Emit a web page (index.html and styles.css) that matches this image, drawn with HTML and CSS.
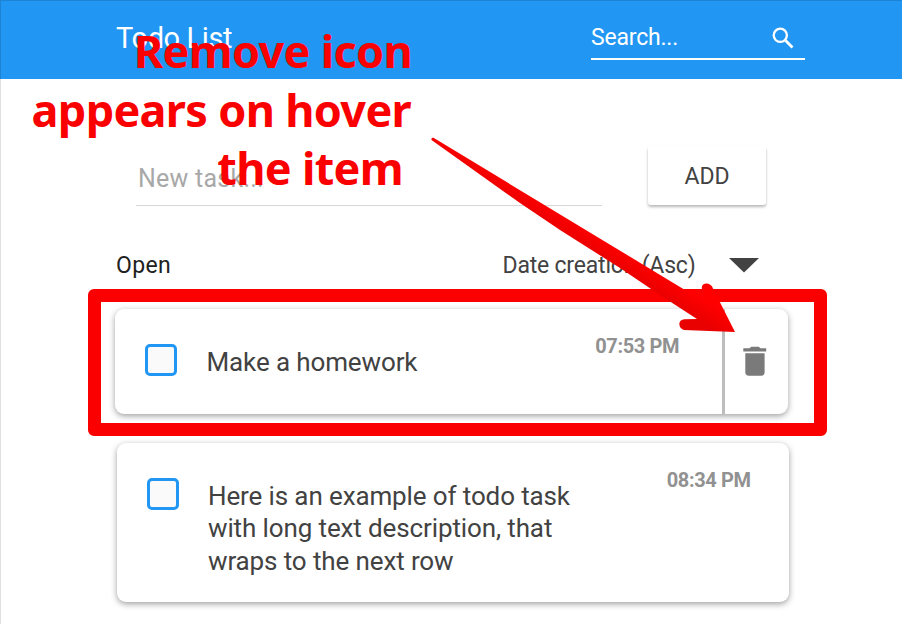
FILE: index.html
```html
<!DOCTYPE html>
<html lang="en">
<head>
<meta charset="utf-8">
<title>Todo List</title>
<link rel="stylesheet" href="styles.css">
</head>
<body>
<div class="app">
  <header class="header">
    <h1 class="title"><span>Todo List</span></h1>
    <div class="search">
      <span>Search...</span>
      <svg class="search-icon" viewBox="0 0 22 22"><circle cx="8.3" cy="8.3" r="6.6" fill="none" stroke="currentColor" stroke-width="2.3"/><path d="M13 13L20.5 20.5" stroke="currentColor" stroke-width="2.8"/></svg>
    </div>
  </header>
  <main class="main">
    <form class="new-task">
      <div class="field"><span>New task...</span></div>
      <button class="add" type="button">ADD</button>
    </form>
    <div class="toolbar">
      <span class="status">Open</span>
      <span class="sort">Date creation (Asc)</span>
      <svg class="caret" viewBox="0 0 30 15"><path d="M0 0H30L15 14.5Z" fill="#424242"/></svg>
    </div>
    <article class="card card-hover">
      <span class="checkbox"></span>
      <p class="text"><span>Make a homework</span></p>
      <time class="time">07:53 PM</time>
      <div class="remove">
        <svg viewBox="0 0 24 30"><path d="M0.3 2.2H6.5L8.3 0.8H15.7L17.5 2.2H23.2V5.6H0.3ZM2.3 7.3H21.6V26Q21.6 29.8 18 29.8H6Q2.3 29.8 2.3 26Z" fill="#7a7a7a"/></svg>
      </div>
    </article>
    <article class="card card-long">
      <span class="checkbox"></span>
      <p class="text"><span>Here is an example of todo task</span><br><span>with long text description, that</span><br><span>wraps to the next row</span></p>
      <time class="time">08:34 PM</time>
    </article>
  </main>
</div>
<div class="highlight"></div>
<p class="note"><span class="note-first">Remove icon</span><br><span>appears on hover</span><br><span class="note-last">the item</span></p>
<svg class="arrow" viewBox="0 0 902 624">
  <defs>
    <linearGradient id="shade" gradientUnits="userSpaceOnUse" x1="622" y1="228" x2="602" y2="260">
      <stop offset="0.45" stop-color="#ff0000"/><stop offset="1" stop-color="#e90000"/>
    </linearGradient>
  </defs>
  <path d="M433.5 137.8L685 290L702.2 290C699.5 282 711 281.500 713 288.500L735 332L684 330C677.500 328 678 319.500 684.500 319.300L697 319L660 295L620 268L560 230L520 203L431.500 140Q431 137.500 433.500 137.800Z" fill="url(#shade)"/>
</svg>
</body>
</html>
```
FILE: styles.css
```css
* { box-sizing: border-box; }
body { margin: 0; width: 902px; height: 624px; overflow: hidden; background: #fff; font-family: Roboto, sans-serif; color: #424242; position: relative; }
.app { height: 624px; box-shadow: inset 1px 1px 0 rgba(0, 0, 0, 0.12); }
.header { height: 79px; padding: 0 97px 0 116px; display: flex; justify-content: space-between; background: #2196f3; color: #fff; box-shadow: inset 1px 1px 0 rgba(0, 0, 0, 0.12); }
.title { margin: 0; padding-top: 21px; font-size: 29px; line-height: 34px; font-weight: 400; letter-spacing: -0.4px; }
.search { width: 214px; height: 60px; padding: 15px 11px 0 0; display: flex; justify-content: space-between; border-bottom: 2px solid #fff; font-size: 23px; line-height: 45px; letter-spacing: -0.2px; white-space: nowrap; }
.search-icon { width: 22px; height: 22px; margin-top: 12px; }
.main { padding: 67px 113px 0 115px; }
.new-task { display: flex; justify-content: space-between; height: 60px; padding: 0 23px 0 21px; }
.field { width: 466px; height: 60px; padding: 16px 0 0 2px; border-bottom: 1px solid #d8d8d8; font-size: 25px; line-height: 34px; letter-spacing: 0.25px; color: #a8a8a8; }
.add { width: 118px; height: 59px; border: 0; padding: 0; border-radius: 3px; background: #fff; color: #424242; font: 400 23px/61px Roboto, sans-serif; box-shadow: 0 2px 3px rgba(0, 0, 0, 0.28); }
.toolbar { height: 102.500px; padding: 45px 30px 0 1px; display: flex; font-size: 23px; line-height: 30px; }
.status { color: #212121; flex: 1; letter-spacing: 0.35px; }
.sort { letter-spacing: -0.2px; }
.caret { width: 30px; height: 15px; margin: 7px 0 0 33.500px; }
.card { position: relative; width: 673px; display: flex; border-radius: 9px; background: #fff; box-shadow: 0 2px 6px rgba(0, 0, 0, 0.38); }
.card-hover { height: 105px; }
.card-long { height: 159px; width: 672.500px; margin: 29.500px 0 0 1.500px; }
.checkbox { flex: none; width: 32px; height: 32px; margin: 35px 0 0 30px; border: 3px solid #2196f3; border-radius: 5px; background: #fafafa; }
.text { flex: 1; margin: 37px 0 0 29.500px; font-size: 26px; line-height: 32.300px; letter-spacing: -0.12px; white-space: nowrap; }
.time { margin-top: 24px; font-size: 20px; line-height: 26px; font-weight: 700; letter-spacing: -0.4px; color: #919191; white-space: nowrap; }
.card-hover .time { margin-right: 43px; }
.card-long .time { margin-right: 38.500px; }
.remove { width: 66px; border-left: 3px solid #bdbdbd; padding: 37px 0 0 18px; }
.remove svg { display: block; width: 24px; height: 30px; }
.highlight { position: absolute; left: 88px; top: 289px; width: 739px; height: 147px; border: 13px solid #fa0000; border-radius: 6px; }
.note { position: absolute; left: 0; top: 22px; width: 411px; margin: 0; text-align: right; font: 700 45px/58.700px "Noto Sans", sans-serif; letter-spacing: -0.68px; color: #fa0000; white-space: nowrap; }
.note-last { margin-right: 8px; }
.note-first { margin-right: -1px; }
.arrow { position: absolute; left: 0; top: 0; width: 902px; height: 624px; }
```
